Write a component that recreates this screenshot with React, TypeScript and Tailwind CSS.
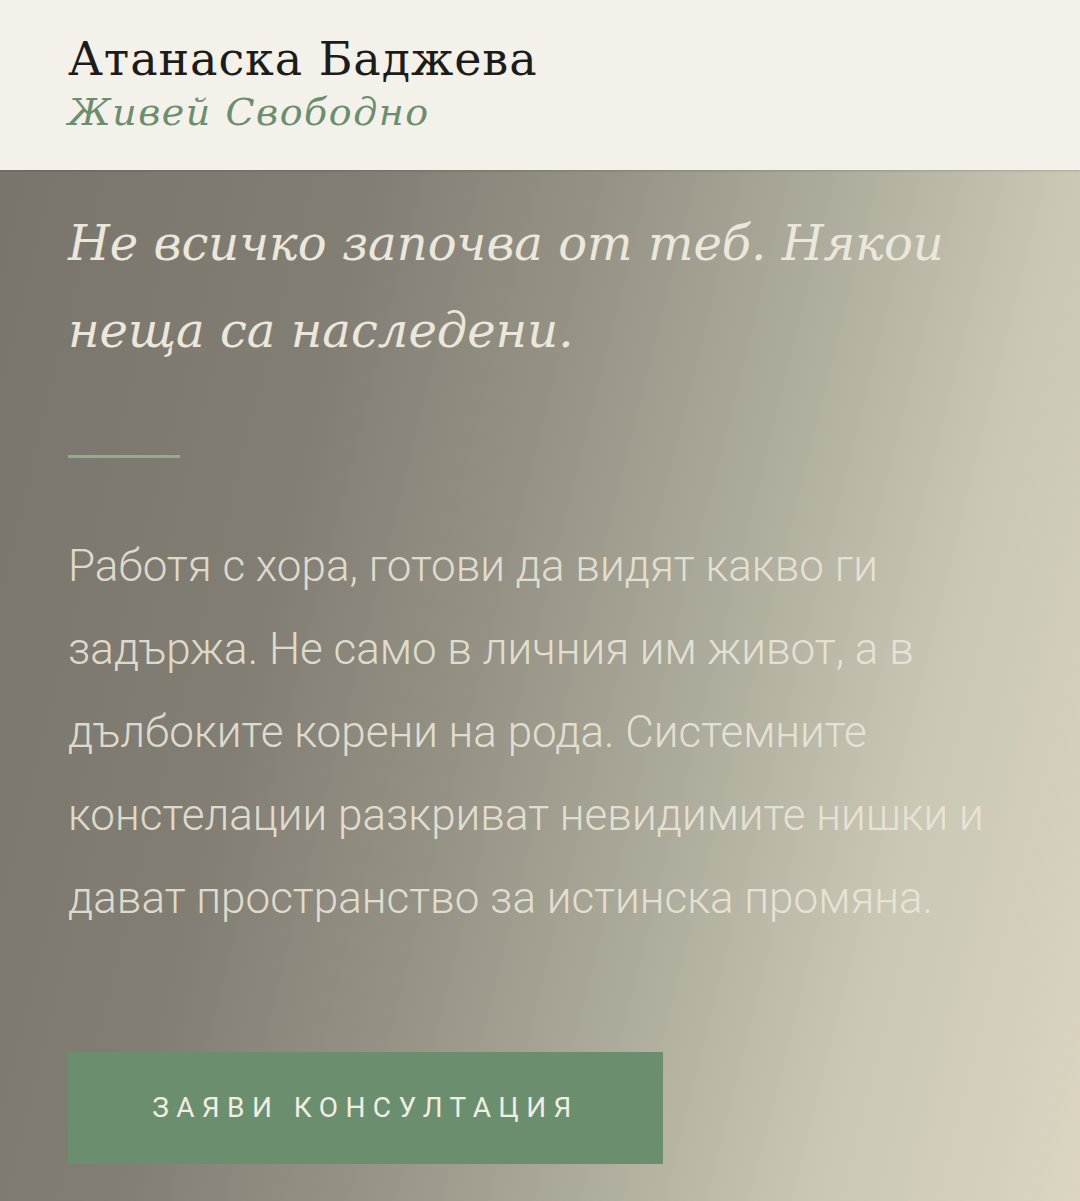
export default function App() {
  return (
    <div className="min-h-screen flex flex-col bg-[#f4f1eb]">
      <header className="h-[170px] shrink-0 px-[68px] pt-[30px] bg-[#f4f1eb] shadow-[0_1px_2px_rgba(0,0,0,0.15)] relative z-10">
        <h1 className="font-['DejaVu_Serif',serif] text-[46px] leading-[58px] tracking-[0.02em] text-[#1d1c19]">
          Атанаска Баджева
        </h1>
        <p className="mt-[2px] font-['DejaVu_Serif',serif] italic text-[38px] leading-[44px] tracking-[0.04em] text-[#6b8f6e]">
          Живей Свободно
        </p>
      </header>

      <section className="flex-1 px-[68px] pt-[30px] pb-[36px] bg-[linear-gradient(104deg,#7a756c_0%,#837e74_28%,#959285_45%,#aeac9c_63%,#cac7b5_80%,#dbd5c2_100%)]">
        <h2 className="font-['DejaVu_Serif',serif] italic text-[48px] leading-[87px] text-[#ebe7dc] max-w-[940px]">
          Не всичко започва от теб. Някои неща са наследени.
        </h2>

        <div className="mt-[81px] h-[3px] w-[112px] bg-[#8fae8c]" />

        <p className="mt-[67px] font-['Roboto',sans-serif] font-light text-[44px] leading-[83px] text-[#ebe7db]/90">
          Работя с хора, готови да видят какво ги задържа. Не само в личния им живот, а в дълбоките корени на рода. Системните констелации разкриват невидимите нишки и дават пространство за истинска промяна.
        </p>

        <button className="mt-[112px] w-[595px] h-[112px] bg-[#6b8f6e] font-['Roboto',sans-serif] text-[28px] tracking-[0.265em] text-[#f0ede4]">
          ЗАЯВИ КОНСУЛТАЦИЯ
        </button>
      </section>
    </div>
  );
}
